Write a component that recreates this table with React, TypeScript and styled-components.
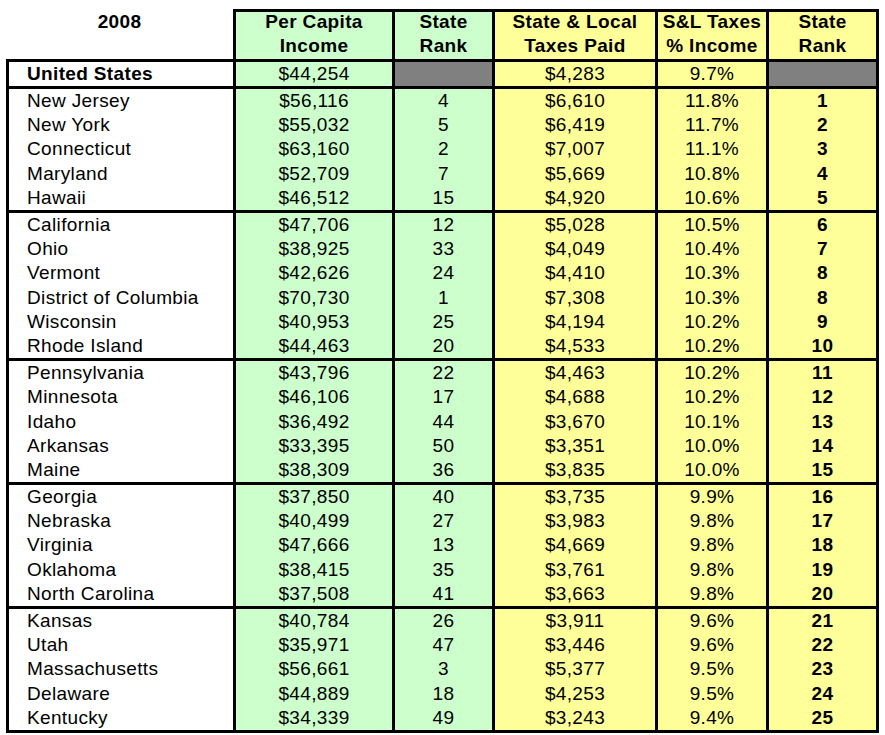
import React from "react";
import styled, { createGlobalStyle, css } from "styled-components";

const GlobalStyle = createGlobalStyle`
  html, body {
    margin: 0;
    padding: 0;
    background: #ffffff;
  }
  body {
    font-family: "Liberation Sans", Arial, sans-serif;
    color: #000000;
  }
`;

const COLUMNS = "227px 159px 100px 163px 111px 113px";

type Tone = "white" | "green" | "yellow" | "gray";

const toneColor: Record<Tone, string> = {
  white: "#ffffff",
  green: "#ccffcc",
  yellow: "#ffff99",
  gray: "#808080",
};

const Page = styled.div`
  padding: 9px 0 0 6px;
`;

const Sheet = styled.div`
  width: 873px;
  display: flex;
  flex-direction: column;
`;

const HeaderRow = styled.div`
  display: grid;
  grid-template-columns: ${COLUMNS};
  height: 50px;
`;

const HeaderCell = styled.div<{ $tone: Tone; $plain?: boolean; $last?: boolean }>`
  box-sizing: border-box;
  background: ${(p) => toneColor[p.$tone]};
  font-weight: bold;
  font-size: 19px;
  letter-spacing: 0.35px;
  line-height: 24px;
  text-align: center;
  ${(p) =>
    p.$plain
      ? css`
          padding-top: 3px;
        `
      : css`
          border-top: 3px solid #000;
          border-left: 3px solid #000;
        `}
  ${(p) =>
    p.$last &&
    css`
      border-right: 3px solid #000;
    `}
`;

const HeaderText = styled.div`
  margin-top: -2px;
`;

const Block = styled.div<{ $closing?: boolean }>`
  border-top: 3px solid #000;
  ${(p) =>
    p.$closing &&
    css`
      border-bottom: 3px solid #000;
    `}
`;

const Row = styled.div<{ $height: number }>`
  display: grid;
  grid-template-columns: ${COLUMNS};
  height: ${(p) => p.$height}px;
`;

const Cell = styled.div<{
  $tone: Tone;
  $align?: "left" | "center";
  $bold?: boolean;
  $last?: boolean;
}>`
  box-sizing: border-box;
  display: flex;
  align-items: center;
  justify-content: ${(p) => (p.$align === "left" ? "flex-start" : "center")};
  padding-left: ${(p) => (p.$align === "left" ? "18px" : "0")};
  background: ${(p) => toneColor[p.$tone]};
  border-left: 3px solid #000;
  ${(p) =>
    p.$last &&
    css`
      border-right: 3px solid #000;
    `}
  font-size: 19px;
  letter-spacing: 0.35px;
  font-weight: ${(p) => (p.$bold ? "bold" : "normal")};
  white-space: nowrap;
  overflow: hidden;
`;

type StateRow = [string, string, string, string, string, string];

const groups: StateRow[][] = [
  [
    ["New Jersey", "$56,116", "4", "$6,610", "11.8%", "1"],
    ["New York", "$55,032", "5", "$6,419", "11.7%", "2"],
    ["Connecticut", "$63,160", "2", "$7,007", "11.1%", "3"],
    ["Maryland", "$52,709", "7", "$5,669", "10.8%", "4"],
    ["Hawaii", "$46,512", "15", "$4,920", "10.6%", "5"],
  ],
  [
    ["California", "$47,706", "12", "$5,028", "10.5%", "6"],
    ["Ohio", "$38,925", "33", "$4,049", "10.4%", "7"],
    ["Vermont", "$42,626", "24", "$4,410", "10.3%", "8"],
    ["District of Columbia", "$70,730", "1", "$7,308", "10.3%", "8"],
    ["Wisconsin", "$40,953", "25", "$4,194", "10.2%", "9"],
    ["Rhode Island", "$44,463", "20", "$4,533", "10.2%", "10"],
  ],
  [
    ["Pennsylvania", "$43,796", "22", "$4,463", "10.2%", "11"],
    ["Minnesota", "$46,106", "17", "$4,688", "10.2%", "12"],
    ["Idaho", "$36,492", "44", "$3,670", "10.1%", "13"],
    ["Arkansas", "$33,395", "50", "$3,351", "10.0%", "14"],
    ["Maine", "$38,309", "36", "$3,835", "10.0%", "15"],
  ],
  [
    ["Georgia", "$37,850", "40", "$3,735", "9.9%", "16"],
    ["Nebraska", "$40,499", "27", "$3,983", "9.8%", "17"],
    ["Virginia", "$47,666", "13", "$4,669", "9.8%", "18"],
    ["Oklahoma", "$38,415", "35", "$3,761", "9.8%", "19"],
    ["North Carolina", "$37,508", "41", "$3,663", "9.8%", "20"],
  ],
  [
    ["Kansas", "$40,784", "26", "$3,911", "9.6%", "21"],
    ["Utah", "$35,971", "47", "$3,446", "9.6%", "22"],
    ["Massachusetts", "$56,661", "3", "$5,377", "9.5%", "23"],
    ["Delaware", "$44,889", "18", "$4,253", "9.5%", "24"],
    ["Kentucky", "$34,339", "49", "$3,243", "9.4%", "25"],
  ],
];

const ROW_HEIGHT = 24.2;

function DataRow({ row }: { row: StateRow }) {
  const [name, income, rank, taxes, pct, srank] = row;
  return (
    <Row $height={ROW_HEIGHT}>
      <Cell $tone="white" $align="left">{name}</Cell>
      <Cell $tone="green">{income}</Cell>
      <Cell $tone="green">{rank}</Cell>
      <Cell $tone="yellow">{taxes}</Cell>
      <Cell $tone="yellow">{pct}</Cell>
      <Cell $tone="yellow" $bold $last>{srank}</Cell>
    </Row>
  );
}

export default function App() {
  return (
    <>
      <GlobalStyle />
      <Page>
        <Sheet>
          <HeaderRow>
            <HeaderCell $tone="white" $plain>
              <HeaderText>2008</HeaderText>
            </HeaderCell>
            <HeaderCell $tone="green">
              <HeaderText>
                Per Capita
                <br />
                Income
              </HeaderText>
            </HeaderCell>
            <HeaderCell $tone="green">
              <HeaderText>
                State
                <br />
                Rank
              </HeaderText>
            </HeaderCell>
            <HeaderCell $tone="yellow">
              <HeaderText>
                State &amp; Local
                <br />
                Taxes Paid
              </HeaderText>
            </HeaderCell>
            <HeaderCell $tone="yellow">
              <HeaderText>
                S&amp;L Taxes
                <br />% Income
              </HeaderText>
            </HeaderCell>
            <HeaderCell $tone="yellow" $last>
              <HeaderText>
                State
                <br />
                Rank
              </HeaderText>
            </HeaderCell>
          </HeaderRow>

          <Block>
            <Row $height={24}>
              <Cell $tone="white" $align="left" $bold>
                United States
              </Cell>
              <Cell $tone="green">$44,254</Cell>
              <Cell $tone="gray" />
              <Cell $tone="yellow">$4,283</Cell>
              <Cell $tone="yellow">9.7%</Cell>
              <Cell $tone="gray" $last />
            </Row>
          </Block>

          {groups.map((g, gi) => (
            <Block key={gi} $closing={gi === groups.length - 1}>
              {g.map((r) => (
                <DataRow key={r[0]} row={r} />
              ))}
            </Block>
          ))}
        </Sheet>
      </Page>
    </>
  );
}
